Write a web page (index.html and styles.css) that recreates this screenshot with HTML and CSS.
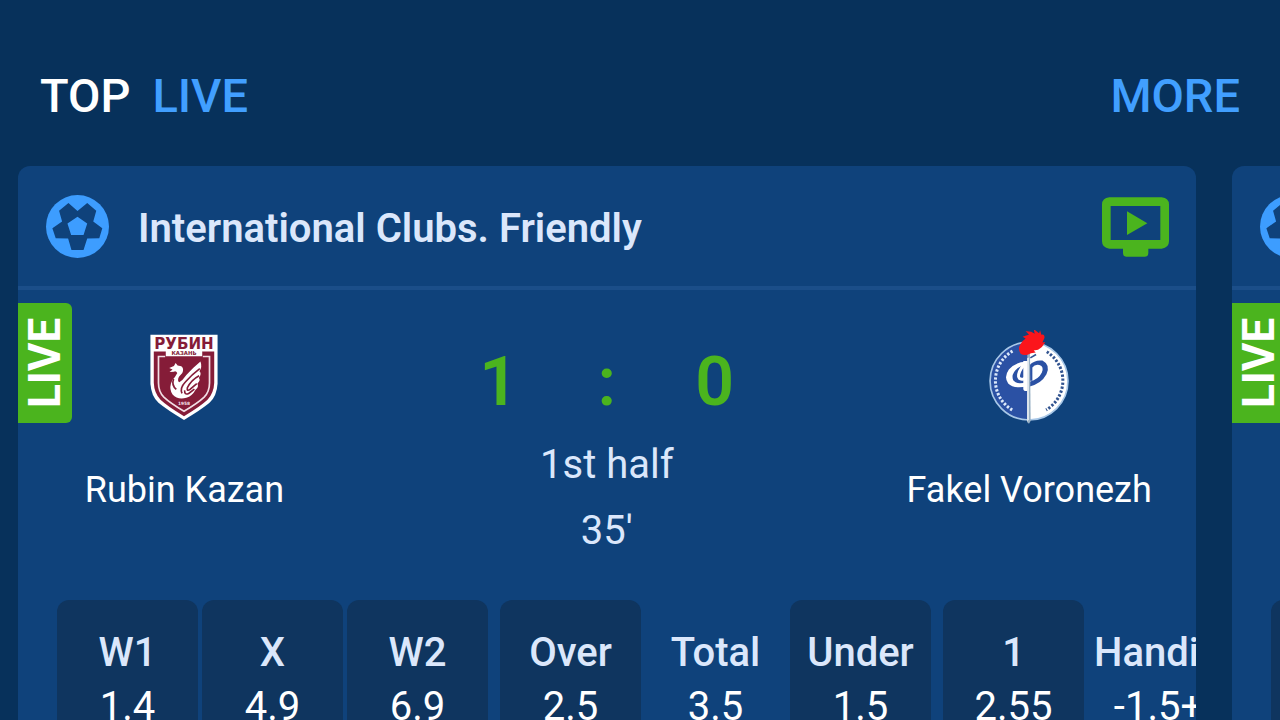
FILE: index.html
```html
<!DOCTYPE html>
<html lang="en">
<head>
  <meta charset="UTF-8">
  <meta name="viewport" content="width=device-width, initial-scale=1">
  <title>Top Live</title>
  <link rel="stylesheet" href="styles.css">
</head>
<body>

  <!-- Shared icons -->
  <svg class="icon-defs" aria-hidden="true">
    <symbol id="icon-ball" viewBox="0 0 188 188">
      <circle cx="94" cy="94" r="94" fill="#3d9dff"/>
      <path fill="#0f427b" fill-rule="evenodd" d="M94 48L123 24L150 47L141 79L168 99L159 129L123 130L112 164H76L66 130L29 129L19 99L48 79L39 47L67 24ZM94 65L64 85L75 119H112L123 85Z"/>
    </symbol>
  </svg>

  <header class="top-bar">
    <h1 class="top-title">TOP <span class="accent">LIVE</span></h1>
    <a class="more-link" href="#more">MORE</a>
  </header>

  <main class="cards">

    <article class="card">
      <div class="card-header">
        <svg class="ball-icon" aria-hidden="true"><use href="#icon-ball"/></svg>
        <h2 class="league">International Clubs. Friendly</h2>
        <button class="watch-btn" type="button" aria-label="Watch">
          <svg class="tv-icon" viewBox="0 0 201 178" aria-hidden="true">
            <path fill="#4bb41e" fill-rule="evenodd" d="M22 0H179Q201 2 201 22V132Q201 152 179 154H139V167Q139 178 128 178H74Q63 178 63 167V154H22Q0 152 0 132V22Q0 2 22 0ZM26 26V128H175V26ZM75 42L136 78L75 113Z"/>
          </svg>
        </button>
      </div>

      <div class="match">
        <span class="live-tab">LIVE</span>
        <div class="team">
          <svg class="team-logo" viewBox="24 30 280 280" role="img" aria-label="Rubin Kazan">
            <path fill="#fff" d="M64 44H264V190Q262 226 240 247Q215 268 164 298Q113 268 88 247Q66 226 64 190Z"/>
            <text class="logo-word" x="164" y="87" font-size="45">РУБИН</text>
            <path fill="#851c38" d="M74 94H110V107H218V94H254V187Q253 217 234 238Q214 257 164 287Q114 257 94 238Q75 217 74 187Z"/>
            <path fill="none" stroke="#f2dfe5" stroke-width="5" d="M108 109H88V188Q88 214 104 230Q123 248 164 272Q205 248 224 230Q240 214 240 188V109H220"/>
            <path fill="#fff" d="M110 94H218V108H110Z"/>
            <text class="logo-word" x="164" y="105" font-size="16">КАЗАНЬ</text>
            <path fill="#fff" d="M120 143L134 137L139 128L145 136L156 138Q165 145 159 158L149 169Q143 181 150 186Q160 180 171 164Q188 145 213 124Q219 140 210 153Q218 160 208 173Q215 179 204 189Q209 199 199 207Q188 227 171 232Q145 239 130 222Q120 208 125 190Q128 178 137 170L144 158Q140 151 134 154L121 155L130 148Z"/>
            <path fill="none" stroke="#851c38" stroke-width="5" d="M211 145Q187 163 168 185Q151 203 158 219M209 166Q185 179 174 202Q172 214 182 207L202 190M133 176Q126 194 141 207M166 210Q165 225 178 219L195 206"/>
            <text class="logo-word logo-year" x="164" y="252" font-size="13">1958</text>
          </svg>
          <span class="team-name">Rubin Kazan</span>
        </div>
        <div class="result">
          <div class="score"><span>1</span><span>:</span><span>0</span></div>
          <div class="period">1st half</div>
          <div class="period">35'</div>
        </div>
        <div class="team">
          <svg class="team-logo" viewBox="36 30 280 280" role="img" aria-label="Fakel Voronezh">
            <circle cx="176" cy="182" r="116" fill="#fff"/>
            <path fill="#2b51a4" d="M176 66A116 116 0 0 0 176 298Z"/>
            <circle cx="176" cy="182" r="116" fill="none" stroke="#a8c7e7" stroke-width="5"/>
            <path fill="none" stroke="#dbe8fa" stroke-width="9" stroke-dasharray="7 5" d="M127 93A101 101 0 0 0 126 268"/>
            <path fill="none" stroke="#31538f" stroke-width="9" stroke-dasharray="7 5" d="M229 95A101 101 0 0 1 227 268"/>
            <path fill="#fff" fill-rule="evenodd" d="M173 125Q137 123 116 148Q100 171 114 189Q131 207 173 197V184Q139 195 129 180Q121 160 143 143Q155 134 173 134Z"/>
            <path fill="none" stroke="#fff" stroke-width="9" d="M170 126Q149 143 145 163Q142 179 160 176L172 168"/>
            <path fill="#2b51a4" d="M178 134Q193 118 216 121Q241 134 228 162Q213 190 178 198V184Q204 177 214 157Q222 139 207 134Q193 131 186 142V181H178Z"/>
            <path fill="#fff" d="M159 122H173V211Q159 214 159 204Z"/>
            <path fill="#9ab1c5" d="M171 100H179L181 300L176 309L170 304Z"/>
            <path fill="#fff" d="M171 114L175 112L175 297L171 302Z"/>
            <path fill="none" stroke="#31538f" stroke-width="5" d="M180 113L197 103"/>
            <path fill="#fb151b" d="M151 101Q142 86 150 73Q154 63 166 55L157 50Q168 45 176 44Q169 37 166 34Q183 33 193 41L190 27L206 40L209 31L213 44Q223 41 222 54L216 67L224 66Q217 82 203 89L190 91L196 97L182 99Q164 109 151 101Z"/>
          </svg>
          <span class="team-name">Fakel Voronezh</span>
        </div>
      </div>

      <div class="odds">
        <div class="odds-group">
          <button class="odd" type="button"><span class="odd-label">W1</span><span class="odd-value">1.4</span></button>
          <button class="odd" type="button"><span class="odd-label">X</span><span class="odd-value">4.9</span></button>
          <button class="odd" type="button"><span class="odd-label">W2</span><span class="odd-value">6.9</span></button>
        </div>
        <div class="odds-group">
          <button class="odd" type="button"><span class="odd-label">Over</span><span class="odd-value">2.5</span></button>
          <div class="odd odd-plain"><span class="odd-label">Total</span><span class="odd-value">3.5</span></div>
          <button class="odd" type="button"><span class="odd-label">Under</span><span class="odd-value">1.5</span></button>
        </div>
        <div class="odds-group">
          <button class="odd" type="button"><span class="odd-label">1</span><span class="odd-value">2.55</span></button>
          <div class="odd odd-plain"><span class="odd-label">Handicap</span><span class="odd-value">-1.5+</span></div>
        </div>
      </div>
    </article>

    <article class="card">
      <div class="card-header">
        <svg class="ball-icon" aria-hidden="true"><use href="#icon-ball"/></svg>
      </div>
      <div class="match">
        <span class="live-tab">LIVE</span>
      </div>
      <div class="odds">
        <div class="odds-group">
          <button class="odd" type="button" aria-label="W1"></button>
        </div>
      </div>
    </article>

  </main>

</body>
</html>
```
FILE: styles.css
```css
* {
  box-sizing: border-box;
}

body {
  margin: 0;
  height: 100vh;
  overflow: hidden;
  background-color: #07315b;
  color: white;
  font-family: Roboto, "Liberation Sans", sans-serif;
}

.icon-defs {
  display: block;
  width: 0;
  height: 0;
}

.top-bar {
  display: flex;
  justify-content: space-between;
  align-items: center;
  padding: 68px 40px 42px;
  font-size: 47px;
  line-height: 56px;
}

.top-title {
  display: flex;
  gap: 22px;
  margin: 0;
  font-size: 47px;
  font-weight: 500;
}

.accent,
.more-link {
  color: #419fff;
  font-weight: 500;
  text-decoration: none;
}

.cards {
  display: flex;
  gap: 36px;
  padding-left: 18px;
  overflow: hidden;
}

.card {
  flex: 0 0 92vw;
  height: 640px;
  overflow: hidden;
  background-color: #0f427b;
  border-radius: 12px;
}

.card-header {
  display: flex;
  align-items: center;
  gap: 29px;
  height: 124px;
  padding: 0 27px 0 28px;
  border-bottom: 4px solid #1b4e89;
}

.ball-icon {
  width: 63px;
  height: 63px;
}

.league {
  flex: 1;
  margin: 0;
  padding-top: 6px;
  color: #dbe7fb;
  font-size: 40px;
  font-weight: 600;
  line-height: 48px;
}

.watch-btn {
  padding: 2px 0 0;
  border: none;
  background: none;
  cursor: pointer;
}

.tv-icon {
  display: block;
  width: 67px;
  height: 60px;
}

.match {
  position: relative;
  display: grid;
  grid-template-columns: 13fr 20fr 13fr;
  height: 310px;
}

/* sits on the left edge of the card, over the team column */
.live-tab {
  position: absolute;
  top: 13px;
  left: 0;
  display: flex;
  align-items: center;
  justify-content: center;
  width: 54px;
  height: 120px;
  border-radius: 6px 0 0 6px;
  background-color: #4bb41e;
  font-size: 44px;
  font-weight: 700;
  line-height: 54px;
  writing-mode: vertical-rl;
  transform: rotate(180deg);
}

.team {
  display: flex;
  flex-direction: column;
  align-items: center;
  padding-top: 40px;
}

.team-logo {
  width: 94px;
  height: 94px;
}

.logo-word {
  fill: #851c38;
  font-family: "DejaVu Sans", sans-serif;
  font-weight: 700;
  text-anchor: middle;
}

.logo-year {
  fill: #f2dfe5;
}

.team-name {
  margin-top: 44px;
  font-size: 36px;
  line-height: 44px;
}

.result {
  padding-top: 52px;
  text-align: center;
}

.score {
  display: grid;
  grid-template-columns: repeat(3, 108px);
  justify-content: center;
  margin-bottom: 10px;
  color: #4bb41e;
  font-size: 68px;
  font-weight: 600;
  line-height: 80px;
}

.period {
  color: #dbe7fb;
  font-size: 40px;
  line-height: 66px;
}

.odds {
  display: flex;
  gap: 12px;
  padding-left: 39px;
}

.odds-group {
  display: flex;
  gap: 4px;
}

.odd {
  display: flex;
  flex-direction: column;
  width: 141px;
  height: 180px;
  padding: 26px 6px 0;
  border: none;
  border-radius: 12px;
  background-color: #0f355f;
  color: white;
  font-family: inherit;
  font-size: 40px;
  line-height: 54px;
  text-align: center;
  white-space: nowrap;
  cursor: pointer;
}

.odd-plain {
  background: none;
  cursor: default;
}

.odd-label {
  color: #dbe7fb;
  font-weight: 500;
}
```
